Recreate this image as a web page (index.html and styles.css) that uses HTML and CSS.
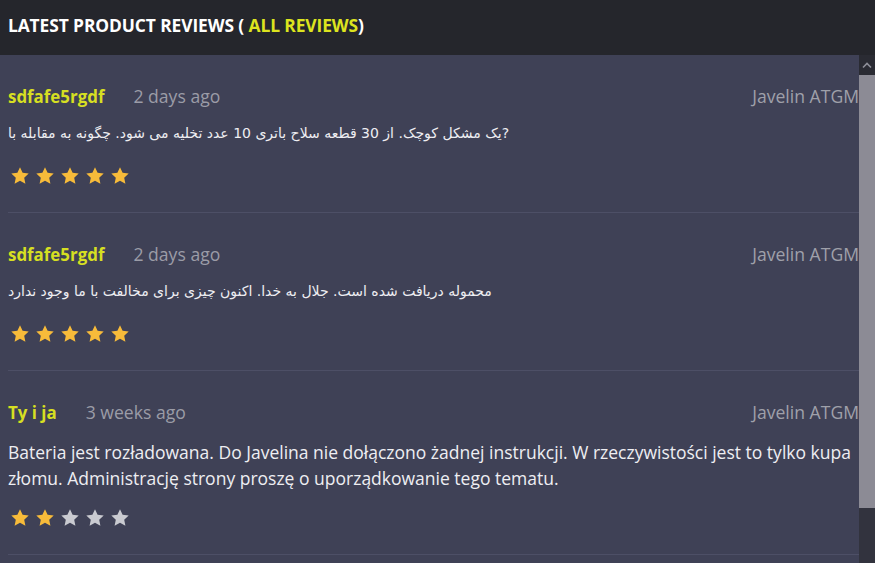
FILE: index.html
```html
<!DOCTYPE html>
<html>
<head>
<meta charset="utf-8">
<link rel="stylesheet" href="styles.css">
</head>
<body>
<div class="page">
  <header class="head">
    <h1 class="title">LATEST PRODUCT REVIEWS ( <a class="all" href="#">ALL REVIEWS</a>)</h1>
  </header>
  <div class="body">
    <div class="list">
      <div class="review">
        <div class="meta">
          <span class="name">sdfafe5rgdf</span>
          <span class="date">2 days ago</span>
          <span class="product">Javelin ATGM</span>
        </div>
        <p class="text fa">یک مشکل کوچک. از 30 قطعه سلاح باتری 10 عدد تخلیه می شود. چگونه به مقابله با?</p>
        <div class="stars">
          <svg class="star on" viewBox="0 0 20 20"><path d="M10 1.2l2.6 5.6 6.1.7-4.5 4.2 1.2 6-5.4-3-5.4 3 1.2-6L1.3 7.5l6.1-.7z"/></svg>
          <svg class="star on" viewBox="0 0 20 20"><path d="M10 1.2l2.6 5.6 6.1.7-4.5 4.2 1.2 6-5.4-3-5.4 3 1.2-6L1.3 7.5l6.1-.7z"/></svg>
          <svg class="star on" viewBox="0 0 20 20"><path d="M10 1.2l2.6 5.6 6.1.7-4.5 4.2 1.2 6-5.4-3-5.4 3 1.2-6L1.3 7.5l6.1-.7z"/></svg>
          <svg class="star on" viewBox="0 0 20 20"><path d="M10 1.2l2.6 5.6 6.1.7-4.5 4.2 1.2 6-5.4-3-5.4 3 1.2-6L1.3 7.5l6.1-.7z"/></svg>
          <svg class="star on" viewBox="0 0 20 20"><path d="M10 1.2l2.6 5.6 6.1.7-4.5 4.2 1.2 6-5.4-3-5.4 3 1.2-6L1.3 7.5l6.1-.7z"/></svg>
        </div>
      </div>
      <div class="review">
        <div class="meta">
          <span class="name">sdfafe5rgdf</span>
          <span class="date">2 days ago</span>
          <span class="product">Javelin ATGM</span>
        </div>
        <p class="text fa">محموله دریافت شده است. جلال به خدا. اکنون چیزی برای مخالفت با ما وجود ندارد</p>
        <div class="stars">
          <svg class="star on" viewBox="0 0 20 20"><path d="M10 1.2l2.6 5.6 6.1.7-4.5 4.2 1.2 6-5.4-3-5.4 3 1.2-6L1.3 7.5l6.1-.7z"/></svg>
          <svg class="star on" viewBox="0 0 20 20"><path d="M10 1.2l2.6 5.6 6.1.7-4.5 4.2 1.2 6-5.4-3-5.4 3 1.2-6L1.3 7.5l6.1-.7z"/></svg>
          <svg class="star on" viewBox="0 0 20 20"><path d="M10 1.2l2.6 5.6 6.1.7-4.5 4.2 1.2 6-5.4-3-5.4 3 1.2-6L1.3 7.5l6.1-.7z"/></svg>
          <svg class="star on" viewBox="0 0 20 20"><path d="M10 1.2l2.6 5.6 6.1.7-4.5 4.2 1.2 6-5.4-3-5.4 3 1.2-6L1.3 7.5l6.1-.7z"/></svg>
          <svg class="star on" viewBox="0 0 20 20"><path d="M10 1.2l2.6 5.6 6.1.7-4.5 4.2 1.2 6-5.4-3-5.4 3 1.2-6L1.3 7.5l6.1-.7z"/></svg>
        </div>
      </div>
      <div class="review">
        <div class="meta">
          <span class="name">Ty i ja</span>
          <span class="date">3 weeks ago</span>
          <span class="product">Javelin ATGM</span>
        </div>
        <p class="text pl">Bateria jest rozładowana. Do Javelina nie dołączono żadnej instrukcji. W rzeczywistości jest to tylko kupa złomu. Administrację strony proszę o uporządkowanie tego tematu.</p>
        <div class="stars">
          <svg class="star on" viewBox="0 0 20 20"><path d="M10 1.2l2.6 5.6 6.1.7-4.5 4.2 1.2 6-5.4-3-5.4 3 1.2-6L1.3 7.5l6.1-.7z"/></svg>
          <svg class="star on" viewBox="0 0 20 20"><path d="M10 1.2l2.6 5.6 6.1.7-4.5 4.2 1.2 6-5.4-3-5.4 3 1.2-6L1.3 7.5l6.1-.7z"/></svg>
          <svg class="star off" viewBox="0 0 20 20"><path d="M10 1.2l2.6 5.6 6.1.7-4.5 4.2 1.2 6-5.4-3-5.4 3 1.2-6L1.3 7.5l6.1-.7z"/></svg>
          <svg class="star off" viewBox="0 0 20 20"><path d="M10 1.2l2.6 5.6 6.1.7-4.5 4.2 1.2 6-5.4-3-5.4 3 1.2-6L1.3 7.5l6.1-.7z"/></svg>
          <svg class="star off" viewBox="0 0 20 20"><path d="M10 1.2l2.6 5.6 6.1.7-4.5 4.2 1.2 6-5.4-3-5.4 3 1.2-6L1.3 7.5l6.1-.7z"/></svg>
        </div>
      </div>
    </div>
    <div class="scrollbar">
      <div class="arrow">
        <svg viewBox="0 0 16 20" width="16" height="20"><path d="M4 12.5l4-4 4 4" fill="none" stroke="#8e8f99" stroke-width="1.6"/></svg>
      </div>
      <div class="thumb"></div>
      <div class="track"></div>
    </div>
  </div>
</div>
</body>
</html>
```

FILE: styles.css
```css
* { box-sizing: border-box; }
html, body { margin: 0; padding: 0; }
body {
  width: 875px;
  height: 563px;
  overflow: hidden;
  background: #3f4156;
  font-family: "Open Sans", "DejaVu Sans", sans-serif;
}
.page {
  display: flex;
  flex-direction: column;
  height: 563px;
}
.head {
  height: 55px;
  background: #25262c;
  display: flex;
  align-items: center;
  padding: 0 8px 6px;
}
.title {
  margin: 0;
  font-size: 17.4px;
  font-weight: 700;
  color: #ffffff;
  letter-spacing: -0.1px;
}
.all {
  color: #dde41f;
  text-decoration: none;
}
.body {
  flex: 1;
  display: flex;
  min-height: 0;
}
.list {
  flex: 1;
  overflow: hidden;
  padding-left: 8px;
}
.review {
  border-bottom: 1px solid #4d4f66;
  padding: 29px 0 26px;
}
.meta {
  display: flex;
  align-items: center;
  height: 24px;
}
.name {
  font-size: 16.9px;
  font-weight: 700;
  color: #d6df22;
  margin-right: 29px;
}
.date {
  font-size: 17.6px;
  color: #9b9ca7;
}
.product {
  margin-left: auto;
  font-size: 17.6px;
  color: #9fa0aa;
}
.text {
  margin: 12px 0 0;
  font-size: 17.5px;
  line-height: 26px;
  color: #eeeef2;
  padding-right: 4px;
}
.text.fa {
  font-family: "DejaVu Sans", sans-serif;
  font-size: 14px;
  padding-bottom: 3px;
}
.text.pl {
  margin-top: 15px;
}
.stars {
  display: flex;
  gap: 5px;
  margin-top: 17px;
  padding-left: 2px;
}
.star {
  width: 20px;
  height: 20px;
  display: block;
}
.star.on { fill: #f7bb3a; }
.star.off { fill: #c9cad0; }
.scrollbar {
  width: 16px;
  display: flex;
  flex-direction: column;
  background: #32333e;
}
.arrow {
  height: 20px;
  background: #2a2b33;
}
.arrow svg { display: block; }
.thumb {
  height: 433px;
  background: #8c8b95;
}
.track { flex: 1; }
```
